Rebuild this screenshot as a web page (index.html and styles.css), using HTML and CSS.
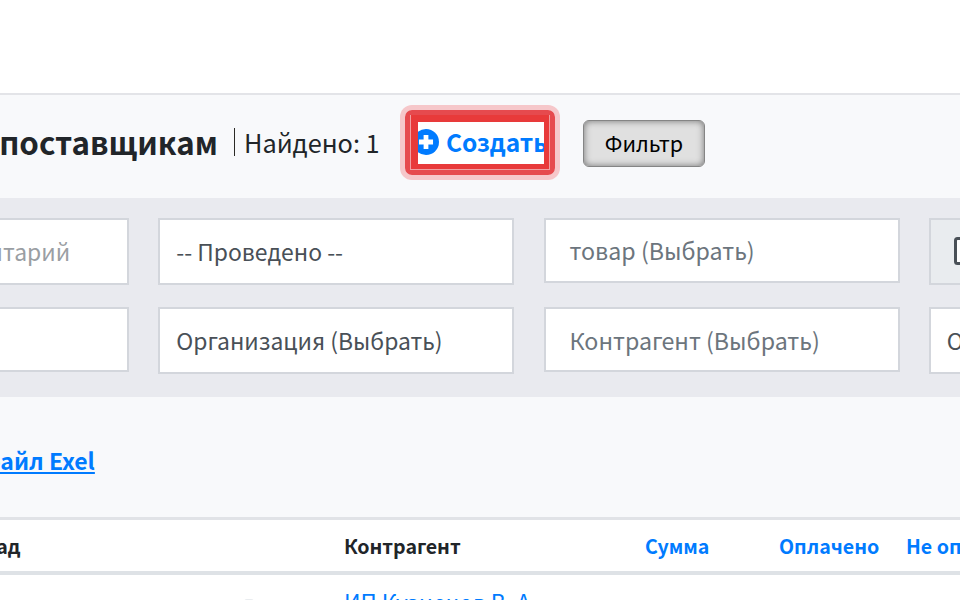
FILE: index.html
```html
<!DOCTYPE html>
<html lang="ru">
<head>
<meta charset="utf-8">
<title>Заказы поставщикам</title>
<link rel="stylesheet" href="styles.css">
</head>
<body>
<div class="top"></div>
<main class="panel">
  <header class="head">
    <h1 class="title">Заказы поставщикам</h1>
    <span class="found">Найдено: 1</span>
    <a class="create" href="#">
      <span class="ring">
        <span class="clip">
          <svg class="plus" viewBox="0 0 24 24" width="26" height="26"><circle cx="12" cy="12" r="12" fill="#007bff"/><path d="M12 5.5v13M5.5 12h13" stroke="#fff" stroke-width="4.4" fill="none"/></svg>
          <span class="create-text">Создать</span>
        </span>
      </span>
    </a>
    <button class="filter" type="button">Фильтр</button>
  </header>
  <section class="filters">
    <div class="field tall muted">Комментарий</div>
    <div class="field tall">-- Проведено --</div>
    <div class="field pick">товар (Выбрать)</div>
    <div class="field tall cal"><svg class="calicon" viewBox="0 0 24 28" width="24" height="28"><rect x="1.5" y="1.5" width="21" height="25" rx="2" fill="#fff" stroke="#495057" stroke-width="3"/></svg></div>
    <div class="field"></div>
    <div class="field tall lower">Организация (Выбрать)</div>
    <div class="field pick">Контрагент (Выбрать)</div>
    <div class="field tall lower">Ответственный</div>
  </section>
  <div class="export"><a href="#">Скачать файл Exel</a></div>
  <div class="table">
    <div class="row heading">
      <div class="c1">Склад</div>
      <div class="c2">Контрагент</div>
      <a class="c3" href="#">Сумма</a>
      <a class="c4" href="#">Оплачено</a>
      <a class="c5" href="#">Не оплачено</a>
    </div>
    <div class="row body">
      <div class="c1 store"><span class="store-name">Основной</span><span class="badge"></span></div>
      <a class="c2 plain" href="#">ИП Кузнецов В. А.</a>
    </div>
  </div>
</main>
</body>
</html>
```
FILE: styles.css
```css
* { box-sizing: border-box; }
html, body { margin: 0; height: 600px; overflow: hidden; background: #fff; }
body { font-family: "Noto Sans CJK SC", "Noto Sans", sans-serif; color: #212529; }
.top { height: 93px; }
.panel { background: #f8f9fb; border-top: 2px solid #e3e4e8; width: 960px; height: 507px; overflow: hidden; }
.head { height: 103px; padding-bottom: 8px; display: flex; align-items: center; white-space: nowrap; }
.title { margin: -2px 16px 0 -150px; width: 368px; flex: none; text-align: right; font-size: 31.3px; line-height: 36px; font-weight: 700; color: #212529; }
.found { width: 171px; flex: none; margin-top: -2px; font-size: 25.3px; line-height: 28px; padding-left: 9px; border-left: 1px solid #2b2a25; }
.create { display: block; flex: none; width: 150px; height: 65px; border: 5px solid #e64a4e; border-radius: 7px; box-shadow: 0 0 0 5px #f6c7ca; text-decoration: none; color: #007bff; font-size: 24.5px; font-weight: 700; }
.ring { display: block; height: 100%; border: 1px solid #f0a0a2; border-top: none; }
.clip { display: flex; align-items: center; height: 100%; background: #fff; border-style: solid; border-color: #e83a3a; border-width: 7px 5px 5px 7px; overflow: hidden; }
.plus { flex: none; margin: -3px 0 0 -5px; }
.create-text { margin-left: 7px; margin-top: -4px; }
.filter { margin: 2px 0 0 28px; width: 122px; height: 47px; border: 1px solid #858585; border-radius: 6px; background: #e0e0e0; box-shadow: inset 0 0 7px #737373; font-family: inherit; font-size: 21.5px; color: #000; padding: 0 0 3px; }
.filters { height: 199px; background: #e9eaef; padding-top: 19.5px; margin-left: -227px; width: 1600px; display: grid; grid-template-columns: repeat(4, 356px); column-gap: 29.25px; grid-template-rows: 89.5px 67px; }
.field { height: 65px; background: #fff; border: 2px solid #d3d6dc; display: flex; align-items: center; padding-left: 16px; font-size: 22.9px; color: #495057; }
.tall { height: 67px; }
.lower { padding-bottom: 2px; }
.muted { color: #9a9ea3; padding-left: 140px; }
.pick { padding-left: 24px; font-size: 23.2px; color: #6c757d; }
.cal { background: #e9ecef; padding-left: 23px; }
.export { height: 120px; padding-top: 43px; margin-left: -120px; font-size: 23px; line-height: 40px; font-weight: 700; }
.export a { color: #007bff; }
.table { background: #fff; border-top: 3px solid #e1e3e7; }
.row { display: flex; align-items: center; }
.heading { height: 55px; border-bottom: 4px solid #dee2e6; font-size: 19.6px; font-weight: 700; white-space: nowrap; }
.heading a { color: #007bff; text-decoration: none; }
.c1 { width: 344px; text-indent: -41px; flex: none; }
.c2 { width: 301px; flex: none; }
.c3 { width: 134px; flex: none; }
.c4 { width: 127px; flex: none; }
.c5 { flex: none; }
.body { height: 60px; font-size: 22.5px; align-items: flex-start; padding-top: 10px; white-space: nowrap; }
.store { display: flex; align-items: flex-start; text-indent: 0; padding-top: 8px; }
.store-name { width: 100px; flex: none; text-align: right; }
.badge { width: 10px; height: 10px; margin: 6px 0 0 144px; border-radius: 3px; background: #e9ecef; flex: none; }
.plain { color: #007bff; text-decoration: none; }
```
